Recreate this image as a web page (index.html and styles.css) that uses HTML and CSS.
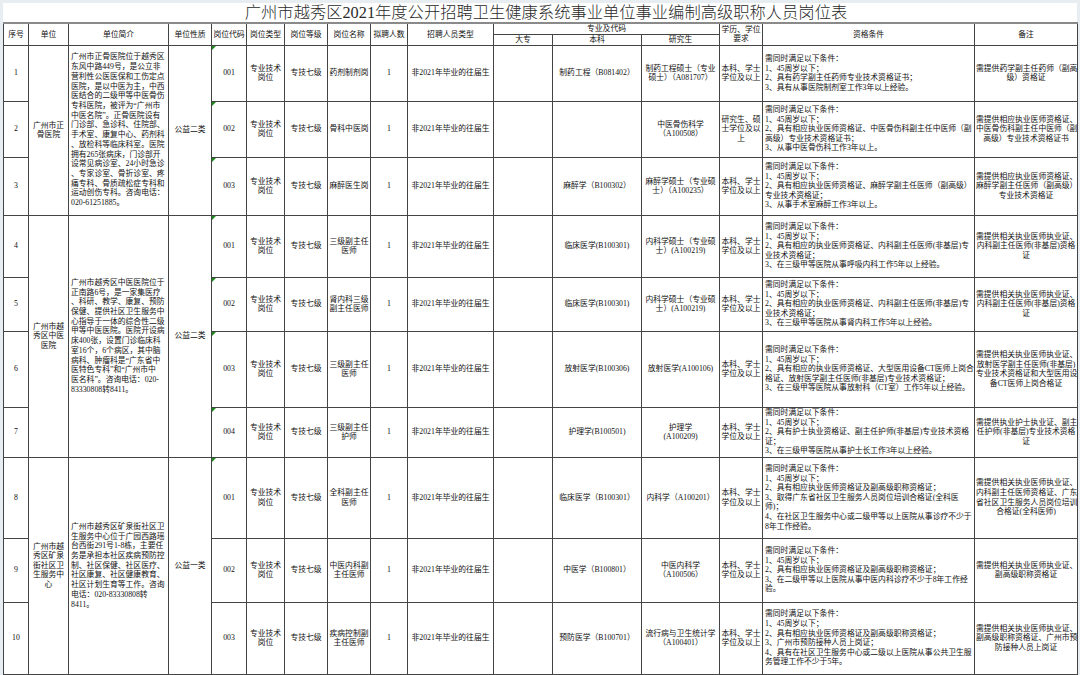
FILE: index.html
```html
<!DOCTYPE html>
<html lang="zh-CN">
<head>
<meta charset="utf-8">
<title>广州市越秀区2021年度公开招聘卫生健康系统事业单位事业编制高级职称人员岗位表</title>
<link rel="stylesheet" href="styles.css">
</head>
<body>
<div class="sheet">
  <div class="title">广州市越秀区2021年度公开招聘卫生健康系统事业单位事业编制高级职称人员岗位表</div>
  <table class="grid">
    <colgroup>
      <col class="c-no"><col class="c-unit"><col class="c-intro"><col class="c-nature"><col class="c-code"><col class="c-type"><col class="c-level"><col class="c-name"><col class="c-num"><col class="c-cat"><col class="c-dz"><col class="c-bk"><col class="c-yjs"><col class="c-edu"><col class="c-qual"><col class="c-note">
    </colgroup>
    <thead>
      <tr class="hr1">
        <th rowspan="2">序号</th>
        <th rowspan="2">单位</th>
        <th rowspan="2">单位简介</th>
        <th rowspan="2">单位性质</th>
        <th rowspan="2">岗位代码</th>
        <th rowspan="2">岗位类型</th>
        <th rowspan="2">岗位等级</th>
        <th rowspan="2">岗位名称</th>
        <th rowspan="2">拟聘人数</th>
        <th rowspan="2">招聘人员类型</th>
        <th colspan="3">专业及代码</th>
        <th rowspan="2">学历、学位<br>要求</th>
        <th rowspan="2">资格条件</th>
        <th rowspan="2">备注</th>
      </tr>
      <tr class="hr2">
        <th>大专</th>
        <th>本科</th>
        <th>研究生</th>
      </tr>
    </thead>
    <tbody>
      <tr class="r1">
        <td>1</td>
        <td rowspan="3">广州市正<br>骨医院</td>
        <td rowspan="3" class="intro">广州市正骨医院位于越秀区<br>东风中路449号，是公立非<br>营利性公医医保和工伤定点<br>医院，是以中医为主，中西<br>医结合的二级甲等中医骨伤<br>专科医院，被评为“广州市<br>中医名院”。正骨医院设有<br>门诊部、急诊科、住院部、<br>手术室、康复中心、药剂科<br>、放检科等临床科室。医院<br>拥有265张病床，门诊部开<br>设常见病诊室、24小时急诊<br>、专家诊室、骨折诊室、疼<br>痛专科、骨质疏松症专科和<br>运动创伤专科。咨询电话：<br>020-61251885。</td>
        <td rowspan="3">公益二类</td>
        <td class="code">001</td>
        <td>专业技术<br>岗位</td>
        <td>专技七级</td>
        <td>药剂制剂岗</td>
        <td>1</td>
        <td>非2021年毕业的往届生</td>
        <td></td>
        <td>制药工程（B081402）</td>
        <td>制药工程硕士（专业<br>硕士）（A081707）</td>
        <td>本科、学士<br>学位及以上</td>
        <td class="qual">需同时满足以下条件：<br>1、45周岁以下；<br>2、具有药学副主任药师专业技术资格证书；<br>3、具有从事医院制剂室工作3年以上经验。</td>
        <td>需提供药学副主任药师（副高<br>级）资格证</td>
      </tr>
      <tr class="r2">
        <td>2</td>
        <td class="code">002</td>
        <td>专业技术<br>岗位</td>
        <td>专技七级</td>
        <td>骨科中医岗</td>
        <td>1</td>
        <td>非2021年毕业的往届生</td>
        <td></td>
        <td></td>
        <td>中医骨伤科学<br>（A100508）</td>
        <td>研究生、硕<br>士学位及以<br>上</td>
        <td class="qual">需同时满足以下条件：<br>1、45周岁以下；<br>2、具有相应执业医师资格证、中医骨伤科副主任中医师（副<br>高级）专业技术资格证书；<br>3、从事中医骨伤科工作3年以上。</td>
        <td>需提供相应执业医师资格证、<br>中医骨伤科副主任中医师（副<br>高级）专业技术资格证书</td>
      </tr>
      <tr class="r3">
        <td>3</td>
        <td class="code">003</td>
        <td>专业技术<br>岗位</td>
        <td>专技七级</td>
        <td>麻醉医生岗</td>
        <td>1</td>
        <td>非2021年毕业的往届生</td>
        <td></td>
        <td>麻醉学（B100302）</td>
        <td>麻醉学硕士（专业硕<br>士）（A100235）</td>
        <td>本科、学士<br>学位及以上</td>
        <td class="qual">需同时满足以下条件：<br>1、45周岁以下；<br>2、具有相应执业医师资格证、麻醉学副主任医师（副高级）<br>专业技术资格证；<br>3、从事手术室麻醉工作3年以上。</td>
        <td>需提供相应执业医师资格证、<br>麻醉学副主任医师（副高级）<br>专业技术资格证</td>
      </tr>
      <tr class="r4">
        <td>4</td>
        <td rowspan="4">广州市越<br>秀区中医<br>医院</td>
        <td rowspan="4" class="intro">广州市越秀区中医医院位于<br>正南路6号，是一家集医疗<br>、科研、教学、康复、预防<br>保健、提供社区卫生服务中<br>心指导于一体的综合性二级<br>甲等中医医院。医院开设病<br>床400张，设置门诊临床科<br>室16个，6个病区，其中脑<br>病科、肿瘤科是“广东省中<br>医特色专科”和“广州市中<br>医名科”。咨询电话：020-<br>83330808转8411。</td>
        <td rowspan="4">公益二类</td>
        <td class="code">001</td>
        <td>专业技术<br>岗位</td>
        <td>专技七级</td>
        <td>三级副主任<br>医师</td>
        <td>1</td>
        <td>非2021年毕业的往届生</td>
        <td></td>
        <td>临床医学(B100301)</td>
        <td>内科学硕士（专业硕<br>士）(A100219)</td>
        <td>本科、学士<br>学位及以上</td>
        <td class="qual">需同时满足以下条件：<br>1、45周岁以下；<br>2、具有相应的执业医师资格证、内科副主任医师(非基层)专<br>业技术资格证；<br>3、在三级甲等医院从事呼吸内科工作5年以上经验。</td>
        <td>需提供相关执业医师执业证、<br>内科副主任医师(非基层)资格<br>证</td>
      </tr>
      <tr class="r5">
        <td>5</td>
        <td class="code">002</td>
        <td>专业技术<br>岗位</td>
        <td>专技七级</td>
        <td>肾内科三级<br>副主任医师</td>
        <td>1</td>
        <td>非2021年毕业的往届生</td>
        <td></td>
        <td>临床医学(B100301)</td>
        <td>内科学硕士（专业硕<br>士）(A100219)</td>
        <td>本科、学士<br>学位及以上</td>
        <td class="qual">需同时满足以下条件：<br>1、45周岁以下；<br>2、具有相应的执业医师资格证、内科副主任医师(非基层)专<br>业技术资格证；<br>3、在三级甲等医院从事肾内科工作5年以上经验。</td>
        <td>需提供相关执业医师执业证、<br>内科副主任医师(非基层)资格<br>证</td>
      </tr>
      <tr class="r6">
        <td>6</td>
        <td class="code">003</td>
        <td>专业技术<br>岗位</td>
        <td>专技七级</td>
        <td>三级副主任<br>医师</td>
        <td>1</td>
        <td>非2021年毕业的往届生</td>
        <td></td>
        <td>放射医学(B100306)</td>
        <td>放射医学(A100106)</td>
        <td>本科、学士<br>学位及以上</td>
        <td class="qual">需同时满足以下条件：<br>1、45周岁以下；<br>2、具有相应的执业医师资格证、大型医用设备CT医师上岗合<br>格证、放射医学副主任医师(非基层)专业技术资格证；<br>3、在三级甲等医院从事放射科（CT室）工作5年以上经验。</td>
        <td>需提供相关执业医师执业证、<br>放射医学副主任医师(非基层)<br>专业技术资格证和大型医用设<br>备CT医师上岗合格证</td>
      </tr>
      <tr class="r7">
        <td>7</td>
        <td class="code">004</td>
        <td>专业技术<br>岗位</td>
        <td>专技七级</td>
        <td>三级副主任<br>护师</td>
        <td>1</td>
        <td>非2021年毕业的往届生</td>
        <td></td>
        <td>护理学(B100501)</td>
        <td>护理学<br>(A100209)</td>
        <td>本科、学士<br>学位及以上</td>
        <td class="qual">需同时满足以下条件：<br>1、45周岁以下；<br>2、具有护士执业资格证、副主任护师(非基层)专业技术资格<br>证；<br>3、在三级甲等医院从事护士长工作3年以上经验。</td>
        <td>需提供执业护士执业证、副主<br>任护师(非基层)专业技术资格<br>证</td>
      </tr>
      <tr class="r8">
        <td>8</td>
        <td rowspan="3">广州市越<br>秀区矿泉<br>街社区卫<br>生服务中<br>心</td>
        <td rowspan="3" class="intro">广州市越秀区矿泉街社区卫<br>生服务中心位于广园西路瑶<br>台西街291号1-8栋，主要任<br>务是承担本社区疾病预防控<br>制、社区保健、社区医疗、<br>社区康复、社区健康教育、<br>社区计划生育等工作。咨询<br>电话：020-83330808转<br>8411。</td>
        <td rowspan="3">公益一类</td>
        <td class="code">001</td>
        <td>专业技术<br>岗位</td>
        <td>专技七级</td>
        <td>全科副主任<br>医师</td>
        <td>1</td>
        <td>非2021年毕业的往届生</td>
        <td></td>
        <td>临床医学（B100301）</td>
        <td>内科学（A100201）</td>
        <td>本科、学士<br>学位及以上</td>
        <td class="qual">需同时满足以下条件：<br>1、45周岁以下；<br>2、具有相应执业医师资格证及副高级职称资格证；<br>3、取得广东省社区卫生服务人员岗位培训合格证(全科医<br>师)；<br>4、在社区卫生服务中心或二级甲等以上医院从事诊疗不少于<br>8年工作经验。</td>
        <td>需提供相关执业医师执业证、<br>内科副主任医师资格证、广东<br>省社区卫生服务人员岗位培训<br>合格证(全科医师)</td>
      </tr>
      <tr class="r9">
        <td>9</td>
        <td>002</td>
        <td>专业技术<br>岗位</td>
        <td>专技七级</td>
        <td>中医内科副<br>主任医师</td>
        <td>1</td>
        <td>非2021年毕业的往届生</td>
        <td></td>
        <td>中医学（B100801）</td>
        <td>中医内科学<br>（A100506）</td>
        <td>本科、学士<br>学位及以上</td>
        <td class="qual">需同时满足以下条件：<br>1、45周岁以下；<br>2、具有相应执业医师资格证及副高级职称资格证；<br>3、在二级甲等以上医院从事中医内科诊疗不少于8年工作经<br>验。</td>
        <td>需提供相关执业医师执业证、<br>副高级职称资格证</td>
      </tr>
      <tr class="r10">
        <td>10</td>
        <td>003</td>
        <td>专业技术<br>岗位</td>
        <td>专技七级</td>
        <td>疾病控制副<br>主任医师</td>
        <td>1</td>
        <td>非2021年毕业的往届生</td>
        <td></td>
        <td>预防医学（B100701）</td>
        <td>流行病与卫生统计学<br>（A100401）</td>
        <td>本科、学士<br>学位及以上</td>
        <td class="qual">需同时满足以下条件：<br>1、45周岁以下；<br>2、具有相应执业医师资格证及副高级职称资格证；<br>3、广州市预防接种人员上岗证；<br>4、具有在社区卫生服务中心或二级以上医院从事公共卫生服<br>务管理工作不少于5年。</td>
        <td>需提供相关执业医师执业证、<br>副高级职称资格证、广州市预<br>防接种人员上岗证</td>
      </tr>
    </tbody>
  </table>
</div>
</body>
</html>
```

FILE: styles.css
```css
html, body {
  margin: 0;
  padding: 0;
}

body {
  background: #e8edf2;
  font-family: "Liberation Serif", "Noto Sans CJK SC", serif;
  color: #111;
}

.sheet {
  width: 1074px;
  padding: 3px 3px 0 3px;
}

.title {
  height: 19px;
  background: #fff;
  text-align: center;
  font-size: 16.3px;
  font-weight: 300;
  line-height: 19px;
  padding-left: 12px;
  color: #2a2a2a;
  white-space: nowrap;
}

.grid {
  border-collapse: collapse;
  table-layout: fixed;
  width: 1074px;
  background: #fff;
  font-size: 7.8px;
  line-height: 9.6px;
}

.grid th,
.grid td {
  border: 1px solid #444;
  padding: 0 1px;
  text-align: center;
  vertical-align: middle;
  font-weight: normal;
  white-space: nowrap;
  overflow: hidden;
}

.grid thead tr.hr1 th {
  border-top: 2px solid #8a8a8a;
}

.c-no { width: 25px; }
.c-unit { width: 40px; }
.c-intro { width: 100px; }
.c-nature { width: 43px; }
.c-code { width: 35px; }
.c-type { width: 38px; }
.c-level { width: 43px; }
.c-name { width: 43px; }
.c-num { width: 37px; }
.c-cat { width: 86px; }
.c-dz { width: 59px; }
.c-bk { width: 89px; }
.c-yjs { width: 78px; }
.c-edu { width: 43px; }
.c-qual { width: 212px; }
.c-note { width: 103px; }

.hr1 { height: 11px; }
.hr2 { height: 11px; }
.r1 { height: 56px; }
.r2 { height: 56px; }
.r3 { height: 58px; }
.r4 { height: 62px; }
.r5 { height: 54px; }
.r6 { height: 76px; }
.r7 { height: 50px; }
.r8 { height: 81px; }
.r9 { height: 64px; }
.r10 { height: 72px; }

.grid td.intro {
  text-align: left;
  padding-left: 2px;
  line-height: 9.7px;
}

.grid td.qual {
  text-align: left;
  padding-left: 2px;
}

.grid td.code {
  position: relative;
}

.grid td.code::before {
  content: "";
  position: absolute;
  left: 0;
  top: 0;
  border-top: 4px solid #1e8a1e;
  border-right: 4px solid transparent;
}
```
